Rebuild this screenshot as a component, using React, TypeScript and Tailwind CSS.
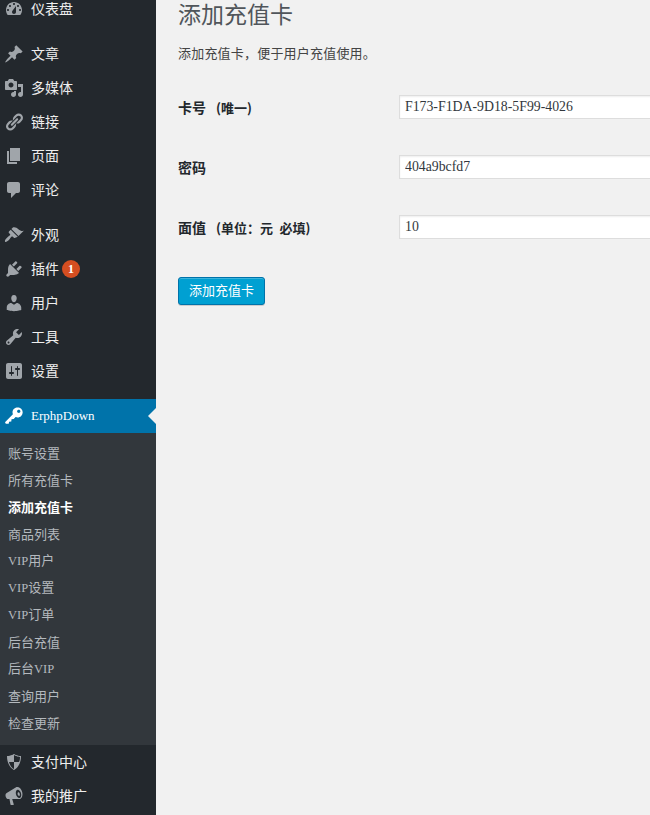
const cjk = "font-['Noto_Sans_CJK_SC','Liberation_Sans',sans-serif]";
const latin = "font-['Liberation_Serif',serif]";

const icons: Record<string, string> = {
    dashboard: "M3.76 16h12.48c1.1-1.37 1.76-3.11 1.76-5 0-4.42-3.58-8-8-8s-8 3.58-8 8c0 1.89.66 3.63 1.76 5zM10 4c.55 0 1 .45 1 1s-.45 1-1 1-1-.45-1-1 .45-1 1-1zM6 6c.55 0 1 .45 1 1s-.45 1-1 1-1-.45-1-1 .45-1 1-1zm8 0c.55 0 1 .45 1 1s-.45 1-1 1-1-.45-1-1 .45-1 1-1zm-5.37 5.55L12 7v6c0 1.1-.9 2-2 2s-2-.9-2-2c0-.57.24-1.08.63-1.45zM4 10c.55 0 1 .45 1 1s-.45 1-1 1-1-.45-1-1 .45-1 1-1zm12 0c.55 0 1 .45 1 1s-.45 1-1 1-1-.45-1-1 .45-1 1-1z",
    post: "M10.44 3.02l1.82-1.82 6.36 6.35-1.83 1.82c-1.05-.68-2.48-.57-3.41.36l-.75.75c-.92.93-1.04 2.35-.35 3.41l-1.83 1.82-2.41-2.41-2.8 2.79c-.42.42-3.38 2.71-3.8 2.29s1.86-3.39 2.28-3.81l2.79-2.79L4.1 9.36l1.83-1.82c1.05.69 2.48.57 3.4-.36l.75-.75c.93-.92 1.05-2.35.36-3.41z",
    media: "M13 11V4c0-.55-.45-1-1-1h-1.67L9 1H5L3.67 3H2c-.55 0-1 .45-1 1v7c0 .55.45 1 1 1h10c.55 0 1-.45 1-1zM7 4.5c1.38 0 2.5 1.12 2.5 2.5S8.38 9.5 7 9.5 4.5 8.38 4.5 7 5.62 4.5 7 4.5zM14 6h5v10.5c0 1.38-1.12 2.5-2.5 2.5S14 17.88 14 16.5s1.12-2.5 2.5-2.5c.17 0 .34.02.5.05V9h-3V6zm-4 8.05V13h2v3.5c0 1.38-1.12 2.5-2.5 2.5S7 17.88 7 16.5 8.12 14 9.5 14c.17 0 .34.02.5.05z",
    links: "M17.74 2.76c1.68 1.69 1.68 4.41 0 6.1l-1.53 1.52c-1.12 1.12-2.7 1.47-4.14 1.09l2.62-2.61.76-.77.76-.76c.84-.84.84-2.2 0-3.04-.84-.85-2.2-.85-3.04 0l-.77.76-3.38 3.38c-.37-1.44-.02-3.02 1.1-4.14l1.52-1.53c1.69-1.68 4.42-1.68 6.1 0zM8.59 13.43l5.34-5.34c.42-.42.42-1.1 0-1.52-.44-.43-1.13-.39-1.53 0l-5.33 5.34c-.42.42-.42 1.1 0 1.52.44.43 1.13.39 1.52 0zm-.76 2.29l4.14-4.15c.38 1.44.03 3.02-1.09 4.14l-1.52 1.53c-1.69 1.68-4.41 1.68-6.1 0-1.68-1.68-1.68-4.42 0-6.1l1.53-1.52c1.12-1.12 2.7-1.47 4.14-1.1l-4.14 4.15c-.85.84-.85 2.2 0 3.05.84.84 2.2.84 3.04 0z",
    page: "M6 15V2h10v13H6zm-1 1h8v2H3V5h2v11z",
    comments: "M5 2h9c1.1 0 2 .9 2 2v7c0 1.1-.9 2-2 2h-2l-5 5v-5H5c-1.1 0-2-.9-2-2V4c0-1.1.9-2 2-2z",
    appearance: "M14.48 11.06L7.41 3.99l1.5-1.5c.5-.56 2.3-.47 3.51.32 1.21.8 1.43 1.28 2.91 2.1 1.18.64 2.45 1.26 4.45.85zm-.71.71L6.7 4.7 4.93 6.47c-.39.39-.39 1.02 0 1.41l1.06 1.06c.39.39.39 1.03 0 1.42-.6.6-1.43 1.11-2.21 1.69-.35.26-.7.53-1.01.84-1.34 1.34-2.37 3.06-1.67 3.76.7.7 2.42-.33 3.76-1.67.31-.31.58-.66.85-1.02.57-.78 1.08-1.6 1.69-2.21.39-.39 1.02-.39 1.41 0l1.06 1.06c.39.39 1.02.39 1.41 0z",
    plugins: "M13.11 4.36L9.87 7.6 8 5.73l3.24-3.24c.35-.34 1.05-.2 1.56.32.52.51.66 1.21.31 1.55zm-8 1.77l.91-1.12 9.01 9.01-1.19.84c-.71.71-2.63 1.16-3.82 1.16H6.14L4.9 17.26c-.59.59-1.54.59-2.12 0-.59-.58-.59-1.53 0-2.12l1.24-1.24v-3.88c0-1.13.4-3.19 1.09-3.89zm7.26 3.97l3.24-3.24c.34-.35 1.04-.21 1.55.31.52.51.66 1.21.31 1.55l-3.24 3.25z",
    users: "M10 9.25c-2.27 0-2.73-3.44-2.73-3.44C7 4.02 7.82 2 9.97 2c2.16 0 2.98 2.02 2.71 3.81 0 0-.41 3.44-2.68 3.44zm0 2.57L12.72 10c2.39 0 4.52 2.33 4.52 4.53v2.49s-3.65 1.13-7.24 1.13c-3.65 0-7.24-1.13-7.24-1.13v-2.49c0-2.25 1.94-4.48 4.47-4.48z",
    tools: "M16.68 9.77c-1.34 1.34-3.3 1.67-4.95.99l-5.41 6.52c-.99.99-2.59.99-3.58 0s-.99-2.59 0-3.57l6.52-5.42c-.68-1.65-.35-3.61.99-4.95 1.28-1.28 3.12-1.62 4.72-1.06l-2.89 2.89 2.82 2.82 2.86-2.87c.53 1.58.18 3.39-1.08 4.65zM3.81 16.21c.4.39 1.04.39 1.43 0 .4-.4.4-1.04 0-1.43-.39-.4-1.03-.4-1.43 0-.39.39-.39 1.03 0 1.43z",
    settings: "M18 16V4c0-1.1-.9-2-2-2H4c-1.1 0-2 .9-2 2v12c0 1.1.9 2 2 2h12c1.1 0 2-.9 2-2zM8 11h1c.55 0 1 .45 1 1s-.45 1-1 1H8v1.5c0 .28-.22.5-.5.5s-.5-.22-.5-.5V13H6c-.55 0-1-.45-1-1s.45-1 1-1h1V5.5c0-.28.22-.5.5-.5s.5.22.5.5V11zm5-2h-1c-.55 0-1-.45-1-1s.45-1 1-1h1V5.5c0-.28.22-.5.5-.5s.5.22.5.5V7h1c.55 0 1 .45 1 1s-.45 1-1 1h-1v5.5c0 .28-.22.5-.5.5s-.5-.22-.5-.5V9z",
    key: "M17.2 2.8c2 2 2 5.2 0 7.1-1.5 1.5-3.8 1.9-5.6 1l-1.9 2.2-2.2.2-.2 2.2-2.2.2-.4 2.1H1.8L1 16.2l7.9-7.9c-.8-2-.4-4.3 1.2-5.5 2-1.9 5.1-1.9 7.1 0zm-3.6 1.4c-.7.7-.7 1.7 0 2.4.7.6 1.7.6 2.3 0 .7-.7.7-1.7 0-2.4-.6-.6-1.6-.6-2.3 0z",
    shield: "M10 2s3 2 7 2c0 11-7 14-7 14S3 15 3 4c4 0 7-2 7-2zm0 8h5s1-1 1-5c0 0-5-1-6-2v7zm-5 0c1 4 4 7 5 7v-7H5z",
    megaphone: "M18.15 5.94c.46 1.62.38 3.22-.02 4.48-.42 1.28-1.26 2.18-2.3 2.48-.16.06-.26.06-.4.06-.06.02-.12.02-.18.02-.06.02-.14.02-.22.02H8.2l1.6 5.5c.02.14-.06.26-.14.34-.08.1-.24.16-.34.16H6.95c-.1 0-.26-.06-.34-.16-.08-.08-.16-.2-.14-.34l-1-5.5H4.25c-.5.06-1.08-.18-1.54-.62s-.88-1.08-1.06-1.88c-.24-.8-.2-1.56-.02-2.2.2-.62.58-1.08 1.06-1.3l9-5.42c.1-.06.18-.1.24-.16.06-.04.14-.08.24-.12.16-.08.28-.12.5-.18 1.04-.3 2.24.1 3.19.98.96.88 1.82 2.24 2.28 3.86zm-2.58 5.98c.4-.1.74-.34 1.04-.72.64-.84.84-2.3.38-3.94-.46-1.64-1.4-2.82-2.36-3.26-.38-.18-.78-.24-1.16-.14-.4.12-.74.36-1.04.74-.62.82-.84 2.3-.38 3.94.46 1.64 1.4 2.82 2.36 3.24.38.18.78.24 1.16.14zm-.38-2.02c-.26.08-.54-.02-.8-.28-.28-.26-.54-.68-.68-1.2-.16-.52-.16-1.02-.06-1.38.12-.36.32-.62.58-.7.28-.08.54.02.82.28.26.26.52.68.68 1.2.14.52.16 1.02.04 1.38-.1.36-.3.62-.58.7z",
};

const Icon = ({ name, color = "text-[#a0a5aa]" }: { name: string; color?: string }) => (
    <svg viewBox="0 0 20 20" className={`w-5 h-5 fill-current ${color}`}>
        <path fillRule="evenodd" d={icons[name]} />
    </svg>
);

const MenuItem = ({ icon, label, badge }: { icon: string; label: string; badge?: string }) => (
    <div className="flex items-center h-[34px] pl-1">
        <Icon name={icon} />
        <span className="ml-[7px] pb-[2px] text-[14px] text-[#eeeeee]">{label}</span>
        {badge && (
            <span className={`ml-[3px] flex items-center justify-center w-[18px] h-[18px] rounded-full bg-[#d54e21] text-white text-[12px] font-bold ${latin}`}>
                {badge}
            </span>
        )}
    </div>
);

const Vip = () => <span className={`${latin} text-[12.5px]`}>VIP</span>;

const subItems = [
    { key: "a", label: <>账号设置</> },
    { key: "b", label: <>所有充值卡</> },
    { key: "c", label: <>添加充值卡</>, current: true },
    { key: "d", label: <>商品列表</> },
    { key: "e", label: <><Vip />用户</> },
    { key: "f", label: <><Vip />设置</> },
    { key: "g", label: <><Vip />订单</> },
    { key: "h", label: <>后台充值</> },
    { key: "i", label: <>后台<Vip /></> },
    { key: "j", label: <>查询用户</> },
    { key: "k", label: <>检查更新</> },
];

const Field = ({ label, note, value }: { label: string; note: string; value: string }) => (
    <div className="flex items-center h-[60px]">
        <div className="w-[221px] shrink-0 font-bold text-[14px] text-[#23282d]">
            {label}
            <span className="ml-[10px] text-[13px]">{note}</span>
        </div>
        <input
            defaultValue={value}
            readOnly
            className={`w-[400px] shrink-0 h-6 px-[5px] bg-white border border-[#dddddd] outline-none ${latin} text-[13.8px] text-[#32373c] shadow-[inset_0_1px_2px_rgba(0,0,0,0.07)]`}
        />
    </div>
);

export default function App() {
    return (
        <div className={`flex w-[650px] h-[815px] overflow-hidden bg-[#f1f1f1] ${cjk}`}>
            <aside className="w-[156px] shrink-0 bg-[#23282d] -mt-2">
                <MenuItem icon="dashboard" label="仪表盘" />
                <div className="mt-[11px]">
                    <MenuItem icon="post" label="文章" />
                    <MenuItem icon="media" label="多媒体" />
                    <MenuItem icon="links" label="链接" />
                    <MenuItem icon="page" label="页面" />
                    <MenuItem icon="comments" label="评论" />
                </div>
                <div className="mt-[11px]">
                    <MenuItem icon="appearance" label="外观" />
                    <MenuItem icon="plugins" label="插件" badge="1" />
                    <MenuItem icon="users" label="用户" />
                    <MenuItem icon="tools" label="工具" />
                    <MenuItem icon="settings" label="设置" />
                </div>
                <div className="relative flex items-center h-[34px] pl-1 mt-[11px] bg-[#0073aa]">
                    <Icon name="key" color="text-white" />
                    <span className={`ml-[7px] ${latin} text-[13px] text-white`}>ErphpDown</span>
                    <div className="absolute right-0 top-[9px] border-y-[8px] border-r-[8px] border-y-transparent border-r-[#f1f1f1]" />
                </div>
                <div className="bg-[#32373c] pt-[7px] pb-2">
                    {subItems.map(x => (
                        <div
                            key={x.key}
                            className={`flex items-center h-[27px] pl-2 pb-[2px] text-[13px] ${x.current ? "font-bold text-white" : "text-[#b4b9be]"}`}
                        >
                            <span>{x.label}</span>
                        </div>
                    ))}
                </div>
                <MenuItem icon="shield" label="支付中心" />
                <MenuItem icon="megaphone" label="我的推广" />
            </aside>
            <main className="flex-1 min-w-0 pl-[22px]">
                <h1 className="h-7 pt-px text-[23px] leading-[24px] text-[#50555a]">添加充值卡</h1>
                <p className="mt-[16px] h-[18px] text-[13px] leading-[18px] tracking-[0.2px] text-[#444444]">添加充值卡，便于用户充值使用。</p>
                <div className="mt-[15px]">
                    <Field label="卡号" note="(唯一)" value="F173-F1DA-9D18-5F99-4026" />
                    <Field label="密码" note="" value="404a9bcfd7" />
                    <Field label="面值" note="(单位：元&#8194;必填)" value="10" />
                </div>
                <button className="mt-5 w-[87px] h-[28px] pb-[2px] rounded-[3px] bg-[#00a0d2] border border-[#0073aa] text-white text-[13px] shadow-[inset_0_1px_0_rgba(120,200,230,0.5),0_1px_0_rgba(0,0,0,0.15)]">
                    添加充值卡
                </button>
            </main>
        </div>
    );
}
